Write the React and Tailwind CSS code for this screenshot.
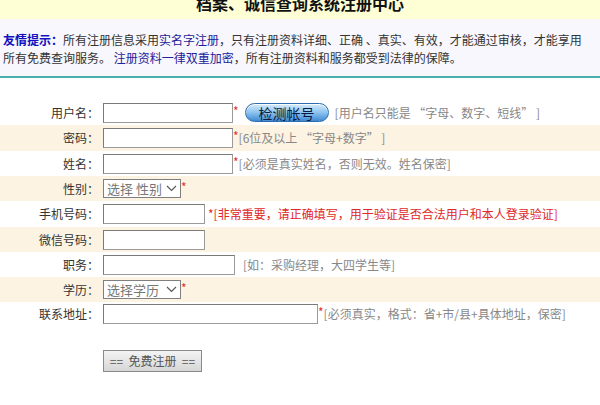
import React from "react";

const font = { fontFamily: '"Noto Sans CJK SC", "Noto Sans", sans-serif' };

function Chevron() {
  return (
    <svg width="11" height="7" viewBox="0 0 11 7" className="ml-auto mr-[3px]">
      <path d="M1 1 L5.5 5.5 L10 1" fill="none" stroke="#555" strokeWidth="1.1" />
    </svg>
  );
}

function Row({ label, beige, h = "h-[25px]", children }) {
  return (
    <div className={`flex items-center ${h} ${beige ? "bg-[#fcf3e3]" : "bg-white"}`}>
      <div className="w-[99px] shrink-0 text-right text-[12px] text-[#333] leading-[14px]">{label}：</div>
      <div className="ml-[4px] flex items-center">{children}</div>
    </div>
  );
}

function Input({ w }) {
  return <div className={`${w} h-[20px] border border-[#9a9a9a] border-t-[#7a7a7a] border-l-[#7a7a7a] bg-white`} />;
}

function Select({ text }) {
  return (
    <div className="flex items-center w-[78px] h-[19px] border border-[#7f7f7f] bg-white pl-[3px] text-[13px] text-[#777] leading-[15px]">
      <span className="whitespace-pre">{text}</span>
      <Chevron />
    </div>
  );
}

const Star = () => <span className="text-[#e03030] text-[12px] leading-[12px] self-start mt-[2px]">*</span>;

export default function App() {
  return (
    <div className="w-[600px] h-[405px] bg-white overflow-hidden" style={font}>
      <div className="h-[19px] bg-[#ffffd6] overflow-hidden">
        <div className="-mt-[6px] text-center text-[16px] leading-[18px] font-bold text-[#111]">
          档案、诚信查询系统注册中心
        </div>
      </div>
      <div className="bg-[#f7f7fd] border-b-2 border-[#4aaeaa] pt-[12px] pb-[9px] pl-[3px] pr-[4px] text-[12px] leading-[18px] text-[#333]">
        <span className="font-bold text-[#1010c0]">友情提示：</span>
        所有注册信息采用<span className="text-[#22229a]">实名字注册</span>，只有注册资料详细、正确 、真实、有效，才能通过审核，才能享用
        <br />
        所有免费查询服务。 <span className="text-[#22229a]">注册资料一律双重加密</span>，所有注册资料和服务都受到法律的保障。
      </div>

      <div className="mt-[22px]">
        <Row label="用户名">
          <Input w="w-[130px]" />
          <Star />
          <div className="ml-[6px] w-[84px] h-[19px] rounded-full border border-[#2f6db0] bg-gradient-to-b from-[#d8ecfb] via-[#8cc3ef] to-[#3f8ad4] flex items-center justify-center text-[14px] leading-[16px] text-[#0a1a40] shadow-[inset_0_1px_0_rgba(255,255,255,0.8)]">
            检测帐号
          </div>
          <span className="ml-[6px] text-[12px] text-[#888] leading-[14px]">[用户名只能是 “字母、数字、短线” ]</span>
        </Row>
        <Row label="密码" beige h="h-[26px]">
          <Input w="w-[130px]" />
          <Star />
          <span className="text-[12px] text-[#888] leading-[14px]">[6位及以上 “字母+数字” ]</span>
        </Row>
        <Row label="姓名">
          <Input w="w-[130px]" />
          <Star />
          <span className="text-[12px] text-[#888] leading-[14px]">[必须是真实姓名，否则无效。姓名保密]</span>
        </Row>
        <Row label="性别" beige>
          <Select text="选择 性别" />
          <Star />
        </Row>
        <Row label="手机号码" h="h-[26px]">
          <Input w="w-[102px]" />
          <span className="ml-[3px] text-[12px] text-[#e02828] leading-[14px]">*[非常重要，请正确填写，用于验证是否合法用户和本人登录验证]</span>
        </Row>
        <Row label="微信号码" beige>
          <Input w="w-[102px]" />
        </Row>
        <Row label="职务">
          <Input w="w-[132px]" />
          <span className="ml-[8px] text-[12px] text-[#888] leading-[14px]">[如：采购经理，大四学生等]</span>
        </Row>
        <Row label="学历" beige>
          <Select text="选择学历" />
          <Star />
        </Row>
        <Row label="联系地址" h="h-[24px]">
          <Input w="w-[215px]" />
          <Star />
          <span className="text-[12px] text-[#888] leading-[14px]">[必须真实，格式：省+市/县+具体地址，保密]</span>
        </Row>
      </div>

      <div className="mt-[21px] ml-[103px]">
        <div className="inline-flex items-center justify-center w-[99px] h-[22px] border border-[#8a8a8a] bg-gradient-to-b from-[#f4f4f4] to-[#d6d6d6] text-[12px] leading-[14px] text-[#555] whitespace-pre">
          {"==  免费注册  =="}
        </div>
      </div>
    </div>
  );
}
